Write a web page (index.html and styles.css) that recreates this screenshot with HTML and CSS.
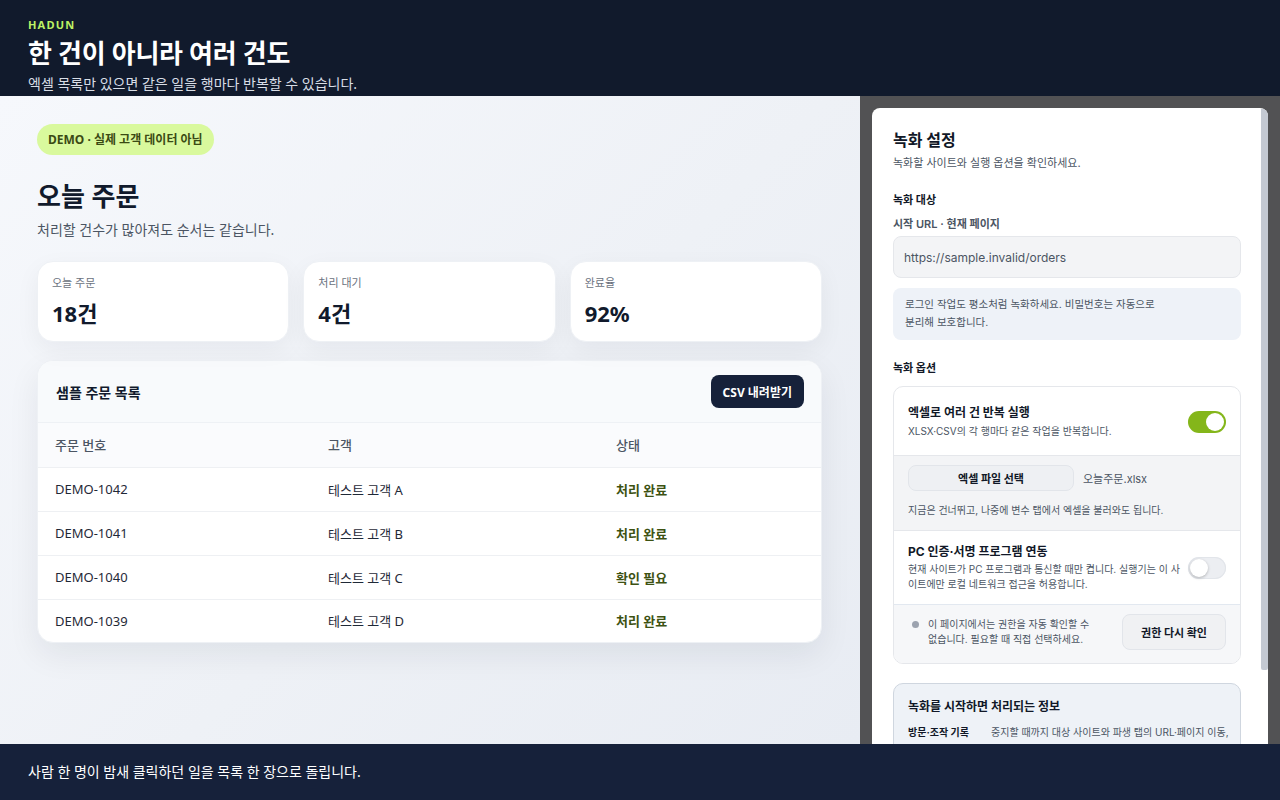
FILE: index.html
```html
<!DOCTYPE html>
<html lang="ko">
<head>
    <meta charset="UTF-8">
    <meta name="viewport" content="width=device-width, initial-scale=1.0">
    <title>HADUN · 여러 건 반복 실행</title>
    <link rel="stylesheet" href="styles.css">
</head>
<body>
    <header class="top">
        <div class="brand">HADUN</div>
        <h1>한 건이 아니라 여러 건도</h1>
        <p>엑셀 목록만 있으면 같은 일을 행마다 반복할 수 있습니다.</p>
    </header>

    <div class="stage">
        <!-- 데모 주문 화면 -->
        <main class="demo">
            <span class="badge">DEMO · 실제 고객 데이터 아님</span>
            <h2>오늘 주문</h2>
            <p class="lead">처리할 건수가 많아져도 순서는 같습니다.</p>

            <div class="stats">
                <div class="stat">
                    <div class="stat-label">오늘 주문</div>
                    <div class="stat-value">18건</div>
                </div>
                <div class="stat">
                    <div class="stat-label">처리 대기</div>
                    <div class="stat-value">4건</div>
                </div>
                <div class="stat">
                    <div class="stat-label">완료율</div>
                    <div class="stat-value">92%</div>
                </div>
            </div>

            <section class="orders">
                <div class="orders-head">
                    <h3>샘플 주문 목록</h3>
                    <button class="btn-dark">CSV 내려받기</button>
                </div>
                <table>
                    <thead>
                        <tr><th class="c1">주문 번호</th><th class="c2">고객</th><th>상태</th></tr>
                    </thead>
                    <tbody>
                        <tr><td>DEMO-1042</td><td>테스트 고객 A</td><td class="status">처리 완료</td></tr>
                        <tr><td>DEMO-1041</td><td>테스트 고객 B</td><td class="status">처리 완료</td></tr>
                        <tr><td>DEMO-1040</td><td>테스트 고객 C</td><td class="status">확인 필요</td></tr>
                        <tr><td>DEMO-1039</td><td>테스트 고객 D</td><td class="status">처리 완료</td></tr>
                    </tbody>
                </table>
            </section>
        </main>

        <!-- 녹화 설정 패널 -->
        <aside class="dock">
            <div class="panel">
                <div class="panel-body">
                    <h2 class="panel-title">녹화 설정</h2>
                    <p class="panel-sub">녹화할 사이트와 실행 옵션을 확인하세요.</p>

                    <h4 class="sec-title first">녹화 대상</h4>
                    <div class="field-label">시작 URL · 현재 페이지</div>
                    <div class="url-box">https://sample.invalid/orders</div>
                    <div class="hint">로그인 작업도 평소처럼 녹화하세요. 비밀번호는 자동으로<br>분리해 보호합니다.</div>

                    <h4 class="sec-title">녹화 옵션</h4>
                    <div class="options">
                        <div class="opt">
                            <div class="opt-text">
                                <div class="opt-name">엑셀로 여러 건 반복 실행</div>
                                <div class="opt-desc">XLSX·CSV의 각 행마다 같은 작업을 반복합니다.</div>
                            </div>
                            <span class="toggle on"></span>
                        </div>
                        <div class="opt-sub">
                            <div class="file-row">
                                <button class="btn-file">엑셀 파일 선택</button>
                                <span class="file-name">오늘주문.xlsx</span>
                            </div>
                            <div class="opt-note">지금은 건너뛰고, 나중에 변수 탭에서 엑셀을 불러와도 됩니다.</div>
                        </div>
                        <div class="opt opt-pc">
                            <div class="opt-text">
                                <div class="opt-name">PC 인증·서명 프로그램 연동</div>
                                <div class="opt-desc">현재 사이트가 PC 프로그램과 통신할 때만 켭니다. 실행기는 이 사<br>이트에만 로컬 네트워크 접근을 허용합니다.</div>
                            </div>
                            <span class="toggle"></span>
                        </div>
                        <div class="perm">
                            <span class="dot"></span>
                            <p>이 페이지에서는 권한을 자동 확인할 수<br>없습니다. 필요할 때 직접 선택하세요.</p>
                            <button class="btn-perm">권한 다시 확인</button>
                        </div>
                    </div>

                    <div class="notice">
                        <h5>녹화를 시작하면 처리되는 정보</h5>
                        <div class="notice-row">
                            <span class="k">방문·조작 기록</span>
                            <span class="v">중지할 때까지 대상 사이트와 파생 탭의 URL·페이지 이동,<br>클릭과 입력 순서를 기록합니다.</span>
                        </div>
                    </div>
                </div>
                <div class="scrollbar"><span class="thumb"></span></div>
            </div>
        </aside>
    </div>

    <footer class="bottom">사람 한 명이 밤새 클릭하던 일을 목록 한 장으로 돌립니다.</footer>
</body>
</html>
```

FILE: styles.css
```css
/* 전체 틀 */
* {
    box-sizing: border-box;
}

html, body {
    height: 100%;
}

body {
    margin: 0;
    height: 100vh;
    overflow: hidden;
    display: grid;
    grid-template-rows: 96px 1fr 56px;
    font-family: "Noto Sans", "Noto Sans CJK KR", sans-serif;
    color: #111827;
}

h1, h2, h3, h4, h5, p {
    margin: 0;
}

button {
    font-family: inherit;
    cursor: pointer;
}

/* 상단 머리글 */
.top {
    background: #111a2c;
    color: #fff;
    padding: 18px 28px 0;
}

.brand {
    font-size: 11px;
    font-weight: 700;
    letter-spacing: 1.2px;
    color: #bef264;
    line-height: 14px;
}

.top h1 {
    font-size: 26px;
    font-weight: 700;
    line-height: 34px;
    margin-top: 4px;
    letter-spacing: -0.3px;
}

.top p {
    font-size: 14px;
    line-height: 20px;
    color: #d8dde6;
    margin-top: 4px;
}

.bottom {
    background: #16213a;
    color: #fff;
    font-size: 14px;
    line-height: 20px;
    padding: 18px 28px;
}

.stage {
    display: grid;
    grid-template-columns: 860px 420px;
    min-height: 0;
}

/* 데모 주문 화면 */
.demo {
    background: linear-gradient(135deg, #f6f8fc 0%, #eef1f6 55%, #e8ecf3 100%);
    padding: 28px 38px 0 37px;
}

.badge {
    display: inline-block;
    background: #d9f99d;
    color: #3b4a14;
    font-size: 12px;
    font-weight: 700;
    line-height: 31px;
    padding: 0 11px;
    border-radius: 16px;
}

.demo h2 {
    font-size: 26px;
    line-height: 34px;
    font-weight: 700;
    margin-top: 24px;
    color: #111a2c;
}

.lead {
    font-size: 14px;
    line-height: 20px;
    color: #4b5563;
    margin-top: 7px;
}

.stats {
    display: grid;
    grid-template-columns: repeat(3, 1fr);
    gap: 14px;
    margin-top: 21px;
}

.stat {
    background: #fff;
    border: 1px solid #eef1f5;
    border-radius: 16px;
    padding: 13px 14px 14px;
    box-shadow: 0 8px 24px rgba(15, 23, 42, 0.05);
}

.stat-label {
    font-size: 11px;
    line-height: 16px;
    color: #6b7280;
}

.stat-value {
    font-size: 22px;
    line-height: 28px;
    font-weight: 700;
    color: #111a2c;
    margin-top: 8px;
}

.orders {
    margin-top: 18px;
    background: #fff;
    border: 1px solid #eef1f5;
    border-radius: 16px;
    overflow: hidden;
    box-shadow: 0 12px 32px rgba(15, 23, 42, 0.07);
}

.orders-head {
    display: flex;
    align-items: center;
    justify-content: space-between;
    height: 62px;
    padding: 0 17px 0 18px;
    background: #f8fafc;
    border-bottom: 1px solid #eef1f5;
}

.orders-head h3 {
    font-size: 14px;
    font-weight: 700;
    color: #111a2c;
}

.btn-dark {
    background: #16213a;
    color: #fff;
    border: none;
    border-radius: 8px;
    height: 33px;
    padding: 0 12px;
    font-size: 12px;
    font-weight: 700;
}

table {
    width: 100%;
    border-collapse: collapse;
    font-size: 13px;
}

th, td {
    text-align: left;
    padding: 0 17px;
    height: 44px;
}

th {
    font-weight: 500;
    color: #4b5563;
    background: #fafbfd;
}

.c1 { width: 273px; }
.c2 { width: 288px; }

td {
    color: #1f2937;
    border-top: 1px solid #eef0f3;
}

tbody tr:last-child td {
    height: 43px;
}

.status {
    font-weight: 700;
    color: #3d5212;
}

/* 녹화 설정 패널 */
.dock {
    background: #525254;
    padding: 12px 12px 0;
    min-height: 0;
}

.panel {
    height: 100%;
    display: flex;
    background: #fff;
    border-radius: 8px 8px 0 0;
    overflow: hidden;
    font-family: "Inter", "Noto Sans CJK KR", sans-serif;
}

.panel-body {
    flex: 1;
    min-width: 0;
    overflow: hidden;
    padding: 21px 20px 0 21px;
}

/* 패널 스크롤 막대 */
.scrollbar {
    flex: none;
    width: 7px;
    display: flex;
    flex-direction: column;
    padding-top: 1px;
}

.thumb {
    height: 561px;
    background: #c4c9d2;
    border-radius: 0 5px 2px 2px;
}

.panel-title {
    font-size: 16px;
    line-height: 22px;
    font-weight: 700;
    color: #111827;
}

.panel-sub {
    font-size: 11px;
    line-height: 16px;
    color: #4b5563;
    margin-top: 4px;
}

.sec-title {
    font-size: 11px;
    line-height: 16px;
    font-weight: 700;
    color: #111827;
    margin-top: 20px;
}

.sec-title.first {
    margin-top: 21px;
}

.field-label {
    font-size: 11px;
    line-height: 16px;
    font-weight: 600;
    color: #4b5563;
    margin-top: 8px;
}

.url-box {
    margin-top: 4px;
    height: 42px;
    display: flex;
    align-items: center;
    padding: 0 10px;
    background: #f3f4f6;
    border: 1px solid #e5e7eb;
    border-radius: 8px;
    font-size: 12px;
    color: #4b5563;
}

.hint {
    margin-top: 10px;
    background: #eef2f8;
    border-radius: 8px;
    padding: 8px 12px;
    font-size: 10.5px;
    line-height: 18px;
    color: #4b5563;
}

.options {
    margin-top: 10px;
    border: 1px solid #e5e7eb;
    border-radius: 10px;
    overflow: hidden;
}

.opt {
    display: flex;
    align-items: center;
    gap: 10px;
    padding: 17px 14px 16px;
}

.opt-text {
    flex: 1;
    min-width: 0;
}

.opt-name {
    font-size: 12px;
    line-height: 18px;
    font-weight: 700;
    color: #111827;
}

.opt-desc {
    font-size: 10px;
    line-height: 16px;
    color: #4b5563;
    margin-top: 1px;
}

.opt-pc {
    padding: 12px 14px 12px;
    border-top: 1px solid #e5e7eb;
}

.opt-pc .opt-desc {
    line-height: 15px;
    white-space: nowrap;
}

/* 토글 스위치 */
.toggle {
    flex: none;
    position: relative;
    width: 38px;
    height: 22px;
    border-radius: 11px;
    background: #eceef2;
    box-shadow: inset 0 0 0 1px #e2e5ea;
}

.toggle::after {
    content: '';
    position: absolute;
    top: 2px;
    left: 2px;
    width: 18px;
    height: 18px;
    border-radius: 50%;
    background: #fff;
    box-shadow: 0 1px 3px rgba(0, 0, 0, 0.25);
}

.toggle.on {
    background: #84b61a;
    box-shadow: none;
}

.toggle.on::after {
    left: 18px;
    box-shadow: none;
}

.opt-sub {
    background: #f3f4f6;
    border-top: 1px solid #e5e7eb;
    padding: 9px 14px 12px;
}

.file-row {
    display: flex;
    align-items: center;
    gap: 9px;
}

.btn-file {
    width: 166px;
    height: 26px;
    background: #eef0f3;
    border: 1px solid #e2e5ea;
    border-radius: 8px;
    font-size: 11px;
    font-weight: 700;
    color: #111827;
}

.file-name {
    font-size: 11px;
    color: #4b5563;
}

.opt-note {
    margin-top: 11px;
    font-size: 10px;
    line-height: 16px;
    color: #4b5563;
}

.perm {
    display: flex;
    align-items: center;
    gap: 8px;
    padding: 9px 14px 13px 14px;
    background: #f6f7f9;
    border-top: 1px solid #e2e8f0;
}

.dot {
    flex: none;
    align-self: flex-start;
    width: 7px;
    height: 7px;
    border-radius: 50%;
    background: #9ca3af;
    margin: 7px 1px 0 4px;
}

.perm p {
    flex: 1;
    font-size: 10px;
    line-height: 15px;
    color: #4b5563;
    white-space: nowrap;
}

.btn-perm {
    flex: none;
    width: 104px;
    height: 36px;
    background: #f0f1f3;
    border: 1px solid #e2e5ea;
    border-radius: 8px;
    font-size: 11px;
    font-weight: 700;
    color: #111827;
}

.notice {
    margin-top: 19px;
    background: #eef2f7;
    border: 1px solid #cfd6df;
    border-radius: 10px;
    padding: 14px 14px 14px;
}

.notice h5 {
    font-size: 12px;
    line-height: 18px;
    font-weight: 700;
    color: #111827;
}

.notice-row {
    display: flex;
    gap: 10px;
    margin-top: 7px;
    font-size: 10px;
    line-height: 19px;
}

.notice-row .k {
    flex: none;
    width: 73px;
    font-weight: 700;
    color: #111827;
}

.notice-row .v {
    color: #4b5563;
    white-space: nowrap;
}
```
